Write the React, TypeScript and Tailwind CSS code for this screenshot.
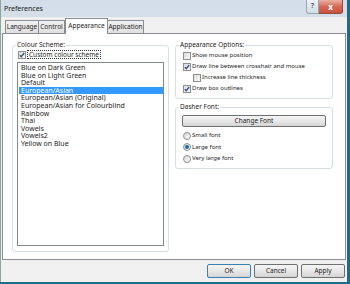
import React from "react";

const schemes = [
  "Blue on Dark Green",
  "Blue on Light Green",
  "Default",
  "European/Asian",
  "European/Asian (Original)",
  "European/Asian for Colourblind",
  "Rainbow",
  "Thai",
  "Vowels",
  "Vowels2",
  "Yellow on Blue",
];

function Check({ on }: { on?: boolean }) {
  return (
    <span className="flex h-[8px] w-[8px] shrink-0 items-center justify-center border border-[#8e8f8f] bg-gradient-to-br from-[#dcdcdc] to-[#fafafa]">
      {on && (
        <svg width="6" height="6" viewBox="0 0 6 6">
          <path d="M0.8 3.2 L2.3 4.7 L5.2 1" fill="none" stroke="#2f4f86" strokeWidth="1.3" />
        </svg>
      )}
    </span>
  );
}

function Radio({ on }: { on?: boolean }) {
  return (
    <span className="flex h-[8px] w-[8px] shrink-0 items-center justify-center rounded-full border border-[#8e8f8f] bg-gradient-to-br from-[#d8d8d8] to-[#fbfbfb]">
      {on && <span className="h-[4px] w-[4px] rounded-full bg-[#1e6aa6]" />}
    </span>
  );
}

function Group({ label, className, children }: { label: string; className: string; children: React.ReactNode }) {
  return (
    <div className={"relative rounded-[3px] border border-[#d5dfe5] " + className}>
      <span className="absolute -top-[5px] left-[3px] bg-white px-[1px] leading-[8px]">{label}</span>
      {children}
    </div>
  );
}

function Btn({ label, def }: { label: string; def?: boolean }) {
  return (
    <div
      className={
        "flex h-[14px] w-[44px] items-center justify-center rounded-[2px] border bg-gradient-to-b from-[#f4f4f4] via-[#e8e8e8] to-[#d4d4d4] " +
        (def ? "border-[#3c7fb1]" : "border-[#707070]")
      }
    >
      {label}
    </div>
  );
}

export default function App() {
  return (
    <div className="h-[284px] w-[350px] overflow-hidden bg-[#1d6d88] pb-[2px] pr-[3px] text-[6.5px] text-[#1e1e1e] [font-family:'Noto_Sans',sans-serif]">
      <div className="flex h-[282px] w-[347px] flex-col border-l border-[#8fa49b] bg-gradient-to-b from-[#d3dee8] to-[#e4ebf1]">
        {/* title bar */}
        <div className="flex h-[17px] items-start">
          <span className="ml-[3px] mt-[4px] text-[7px] leading-[9px] text-[#1b1b1b]">Preferences</span>
          <div className="ml-auto mr-[4px] flex">
            <div className="flex h-[14px] w-[13px] items-center justify-center rounded-bl-[3px] border border-t-0 border-[#97a5b3] bg-gradient-to-b from-[#eef2f6] to-[#d3dde6] text-[7px] font-bold text-[#4a5d70]">
              ?
            </div>
            <div className="flex h-[14px] w-[24px] items-center justify-center rounded-br-[3px] border border-l-0 border-t-0 border-[#95493e] bg-gradient-to-b from-[#eab0a6] via-[#d46a58] to-[#c9503c] text-[8px] font-bold text-white">
              x
            </div>
          </div>
        </div>

        {/* client */}
        <div className="flex flex-1 flex-col bg-[#f0f0f0] px-[1px]">
          <div className="flex h-[16px] items-end pl-[3px]">
            <div className="flex h-[13px] w-[34px] items-center justify-center border border-b-0 border-[#898c95] bg-gradient-to-b from-[#f2f2f2] to-[#dfdfdf]">Language</div>
            <div className="flex h-[13px] w-[26px] items-center justify-center border border-b-0 border-l-0 border-[#898c95] bg-gradient-to-b from-[#f2f2f2] to-[#dfdfdf]">Control</div>
            <div className="relative z-10 -mb-[1px] flex h-[16px] w-[43px] items-center justify-center border border-b-0 border-[#898c95] bg-white pb-[2px]">Appearance</div>
            <div className="flex h-[13px] w-[36px] items-center justify-center border border-b-0 border-l-0 border-[#898c95] bg-gradient-to-b from-[#f2f2f2] to-[#dfdfdf]">Application</div>
          </div>

          <div className="flex h-[227px] gap-[6px] border border-[#898c95] bg-white pl-[9px] pt-[11px]">
            <Group label="Colour Scheme:" className="h-[207px] w-[157px] px-[4px] pt-[4px]">
              <div className="flex h-[9px] items-center gap-[1px] pl-[1px]">
                <Check on />
                <span className="border border-dotted border-[#333] px-[1px] leading-[7px]">Custom colour scheme</span>
              </div>
              <div className="mt-[3px] h-[184px] w-[147px] border border-[#828790] pl-[1px] pt-[1px] text-[7px]">
                {schemes.map((s) => (
                  <div
                    key={s}
                    className={
                      "h-[7.6px] pl-[2px] leading-[7.6px] whitespace-nowrap " + (s === "European/Asian" ? "bg-[#3399ff] text-white" : "")
                    }
                  >
                    {s}
                  </div>
                ))}
              </div>
            </Group>

            <div className="flex flex-col gap-[8px]">
              <Group label="Appearance Options:" className="h-[54px] w-[158px] pl-[7px] pt-[4px]">
                <div className="flex h-[11px] items-center gap-[1px] text-[6px]">
                  <Check />
                  <span>Show mouse position</span>
                </div>
                <div className="flex h-[11px] items-center gap-[1px] text-[6px]">
                  <Check on />
                  <span>Draw line between crosshair and mouse</span>
                </div>
                <div className="flex h-[11px] items-center gap-[1px] pl-[10px] text-[6px]">
                  <Check />
                  <span>Increase line thickness</span>
                </div>
                <div className="flex h-[11px] items-center gap-[1px] text-[6px]">
                  <Check on />
                  <span>Draw box outlines</span>
                </div>
              </Group>

              <Group label="Dasher Font:" className="h-[62px] w-[158px] pl-[6px] pt-[7px]">
                <div className="flex h-[12px] w-[144px] items-center justify-center rounded-[2px] border border-[#707070] bg-gradient-to-b from-[#f4f4f4] via-[#e8e8e8] to-[#d4d4d4]">
                  Change Font
                </div>
                <div className="mt-[3px] flex h-[11.5px] items-center gap-[1px] pl-[1px] text-[6px]">
                  <Radio />
                  <span>Small font</span>
                </div>
                <div className="flex h-[11.5px] items-center gap-[1px] pl-[1px] text-[6px]">
                  <Radio on />
                  <span>Large font</span>
                </div>
                <div className="flex h-[11.5px] items-center gap-[1px] pl-[1px] text-[6px]">
                  <Radio />
                  <span>Very large font</span>
                </div>
              </Group>
            </div>
          </div>

          <div className="flex flex-1 items-center justify-end gap-[3px] pr-[1px]">
            <Btn label="OK" def />
            <Btn label="Cancel" />
            <Btn label="Apply" />
          </div>
        </div>
      </div>
    </div>
  );
}
